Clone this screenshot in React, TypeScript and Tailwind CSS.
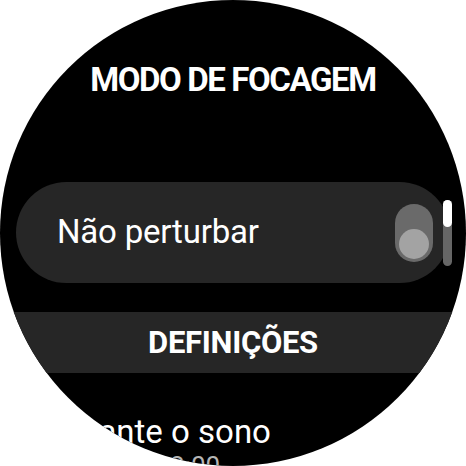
import React from 'react';

const font = { fontFamily: 'Roboto, "Noto Sans", sans-serif' };

function Switch({ on }: { on: boolean }) {
  return (
    <div className="relative shrink-0 w-[38px] h-[58px] rounded-full bg-[#6a6a6a]">
      <div className={`absolute left-[4px] w-[30px] h-[30px] rounded-full bg-[#a3a3a3] ${on ? 'top-[4px]' : 'bottom-[3px]'}`} />
    </div>
  );
}

export default function App() {
  return (
    <div className="w-[466px] h-[466px] bg-white" style={font}>
      <div className="relative w-[466px] h-[466px] rounded-full bg-black overflow-hidden flex flex-col text-white">
        <h1 className="shrink-0 pt-[61px] h-[110px] text-center text-[33px] font-bold tracking-[-1.4px] leading-[38px]">
          MODO DE FOCAGEM
        </h1>

        <div className="shrink-0 mt-[72px] mx-[16px] h-[101px] rounded-full bg-[#262626] flex items-center pl-[41px] pr-[17px]">
          <span className="flex-1 text-[33px] leading-none tracking-[-0.2px] pb-[2px]">Não perturbar</span>
          <Switch on={false} />
        </div>

        <div className="shrink-0 mt-[29px] h-[61px] bg-[#262626] flex items-center justify-center">
          <span className="text-[31px] font-bold leading-none tracking-[-0.3px]">DEFINIÇÕES</span>
        </div>

        <div className="shrink-0 mt-[40px] pl-[48px]">
          <div className="text-[33px] leading-[38px]">Durante o sono</div>
          <div className="text-[26px] leading-[30px] text-[#b5b5b5]">Ativar às 22:00</div>
        </div>

        <div className="absolute left-[443px] top-[200px] w-[9px] h-[66px] rounded-full bg-[#666666]">
          <div className="w-[9px] h-[27px] rounded-full bg-white" />
        </div>
      </div>
    </div>
  );
}
